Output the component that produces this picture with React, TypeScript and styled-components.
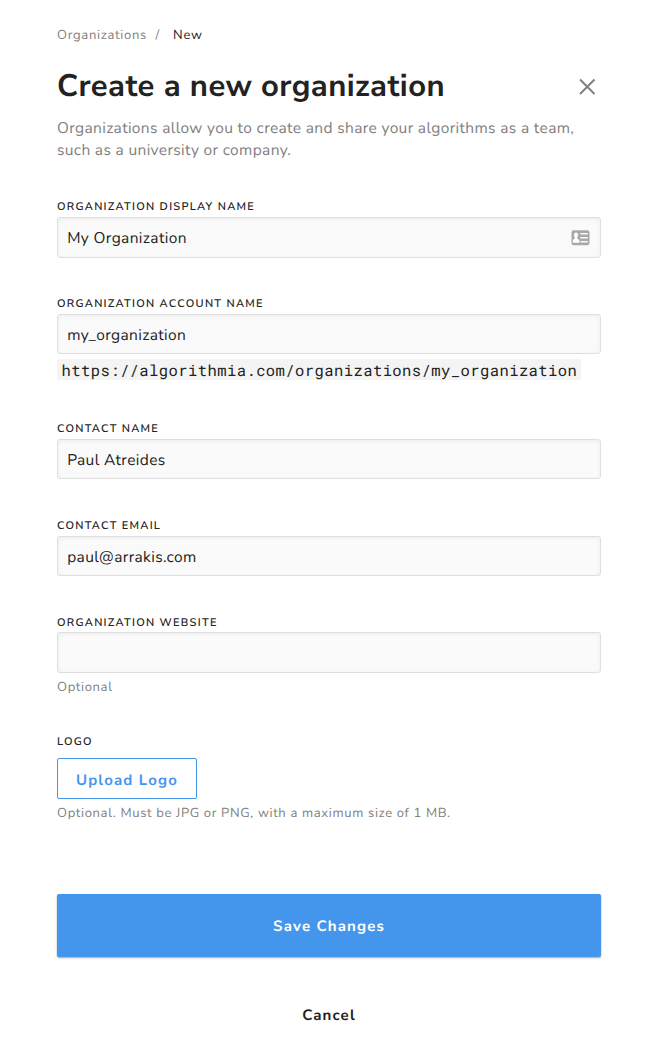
import React from "react";
import styled, { createGlobalStyle } from "styled-components";

const GlobalStyle = createGlobalStyle`
  * { box-sizing: border-box; }
  body {
    margin: 0;
    background: #fff;
    color: #222;
    font-family: "Nunito Sans", Nunito, Lato, "Liberation Sans", sans-serif;
    -webkit-font-smoothing: antialiased;
    text-rendering: geometricPrecision;
  }
`;

const Page = styled.main`
  width: 648px;
  height: 1050px;
  padding: 25px 47px 0 57px;
  overflow: hidden;
`;

const Breadcrumb = styled.nav`
  display: flex;
  height: 20px;
  font-size: 13px;
  line-height: 20px;
  letter-spacing: 0.72px;
  color: #808080;
`;

const Separator = styled.span`
  width: 26px;
  padding-left: 8.5px;
`;

const Current = styled.span`
  color: #222;
`;

const Header = styled.header`
  display: flex;
  align-items: center;
  justify-content: space-between;
  height: 40px;
  margin-top: 21px;
`;

const Title = styled.h1`
  margin: 0;
  font-size: 31px;
  line-height: 40px;
  font-weight: 700;
  letter-spacing: 0.43px;
  white-space: nowrap;
`;

const CloseButton = styled.button`
  display: flex;
  padding: 0;
  margin: 1px 5px 0 0;
  border: 0;
  background: none;
  color: #808080;
`;

const Description = styled.p`
  margin: 12px 0 37px;
  font-size: 15.5px;
  line-height: 22px;
  letter-spacing: 0.35px;
  color: #808080;
  white-space: nowrap;
`;

const Field = styled.div<{ $gap: number }>`
  display: flex;
  flex-direction: column;
  align-items: flex-start;
  margin-bottom: ${(p) => p.$gap}px;
`;

const Label = styled.label<{ $gap?: number }>`
  height: 16px;
  margin-bottom: ${(p) => p.$gap ?? 2}px;
  font-size: 11px;
  line-height: 16px;
  font-weight: 600;
  letter-spacing: 1.27px;
  text-transform: uppercase;
`;

const InputBox = styled.div<{ $height?: number }>`
  display: flex;
  align-items: center;
  width: 100%;
  height: ${(p) => p.$height ?? 40}px;
  padding: 0 10px 0 9.2px;
  border: 1px solid #dfdfdf;
  border-radius: 3px;
  background: #fafafa;
  box-shadow: inset 0 1px 4px rgba(0, 0, 0, 0.06);
`;

const Input = styled.input`
  flex: 1;
  min-width: 0;
  height: 100%;
  padding: 2px 0 0;
  border: 0;
  outline: 0;
  background: none;
  color: #222;
  font: inherit;
  font-size: 15.5px;
  letter-spacing: 0.38px;
  text-rendering: inherit;
`;

const Url = styled.code`
  height: 21px;
  margin-top: 5px;
  padding: 0 4px 0 4.5px;
  border-radius: 2px;
  background: #f4f4f4;
  font-family: "Roboto Mono", "DejaVu Sans Mono", monospace;
  font-size: 15.5px;
  line-height: 24px;
  letter-spacing: 0.43px;
  white-space: nowrap;
`;

const Hint = styled.span`
  height: 20px;
  margin-top: 4px;
  font-size: 13px;
  line-height: 20px;
  letter-spacing: 0.66px;
  color: #808080;
`;

const Button = styled.button`
  padding: 2px 0 0;
  border: 0;
  background: none;
  color: #222;
  font: inherit;
  font-size: 15px;
  font-weight: 700;
  letter-spacing: 1.15px;
  text-rendering: inherit;
`;

const UploadButton = styled(Button)`
  width: 140px;
  height: 41px;
  padding-top: 4px;
  border: 1px solid #4496ec;
  border-radius: 2px;
  background: #fff;
  color: #4496ec;
`;

const Actions = styled.div`
  display: flex;
  flex-direction: column;
  align-items: center;
`;

const SaveButton = styled(Button)`
  width: 100%;
  height: 63px;
  border-radius: 2px;
  background: #4496ec;
  color: #fff;
  box-shadow: 0 1px 2px rgba(0, 0, 0, 0.35);
`;

const CancelButton = styled(Button)`
  height: 30px;
  margin-top: 43px;
`;

const CloseIcon = () => (
  <svg width="18" height="18" viewBox="0 0 18 18" fill="none" stroke="currentColor" strokeWidth="2">
    <path d="M2 1.5 16.5 16M16.5 1.5 2 16" />
  </svg>
);

const ContactIcon = () => (
  <svg width="19" height="16" viewBox="0 0 19 16">
    <rect x="0.5" y="0.3" width="18" height="15" rx="2.2" fill="#a8a8a8" />
    <ellipse cx="5" cy="5" rx="2.1" ry="2.5" fill="#fff" />
    <path d="M3.8 6h2.4v2.6l2.1 1.5v2.7H1.8v-2.7l2-1.5z" fill="#fff" />
    <path d="M9.3 3.8h7.5M9.3 7.8h7.5M9.3 11.8h7.5" stroke="#fafafa" strokeWidth="1.4" />
  </svg>
);

export default function App() {
  return (
    <>
      <GlobalStyle />
      <Page>
        <Breadcrumb>
          <span>Organizations</span>
          <Separator>/</Separator>
          <Current>New</Current>
        </Breadcrumb>
        <Header>
          <Title>Create a new organization</Title>
          <CloseButton aria-label="Close">
            <CloseIcon />
          </CloseButton>
        </Header>
        <Description>
          Organizations allow you to create and share your algorithms as a team,
          <br />
          such as a university or company.
        </Description>

        <Field $gap={38}>
          <Label>Organization display name</Label>
          <InputBox $height={41}>
            <Input defaultValue="My Organization" />
            <ContactIcon />
          </InputBox>
        </Field>
        <Field $gap={41}>
          <Label>Organization account name</Label>
          <InputBox>
            <Input defaultValue="my_organization" />
          </InputBox>
          <Url>https://algorithmia.com/organizations/my_organization</Url>
        </Field>
        <Field $gap={39}>
          <Label>Contact name</Label>
          <InputBox>
            <Input defaultValue="Paul Atreides" />
          </InputBox>
        </Field>
        <Field $gap={39}>
          <Label>Contact email</Label>
          <InputBox>
            <Input defaultValue="paul@arrakis.com" />
          </InputBox>
        </Field>
        <Field $gap={37}>
          <Label $gap={1}>Organization website</Label>
          <InputBox $height={41}>
            <Input />
          </InputBox>
          <Hint>Optional</Hint>
        </Field>
        <Field $gap={71}>
          <Label $gap={8}>Logo</Label>
          <UploadButton>Upload Logo</UploadButton>
          <Hint>Optional. Must be JPG or PNG, with a maximum size of 1 MB.</Hint>
        </Field>

        <Actions>
          <SaveButton>Save Changes</SaveButton>
          <CancelButton>Cancel</CancelButton>
        </Actions>
      </Page>
    </>
  );
}
